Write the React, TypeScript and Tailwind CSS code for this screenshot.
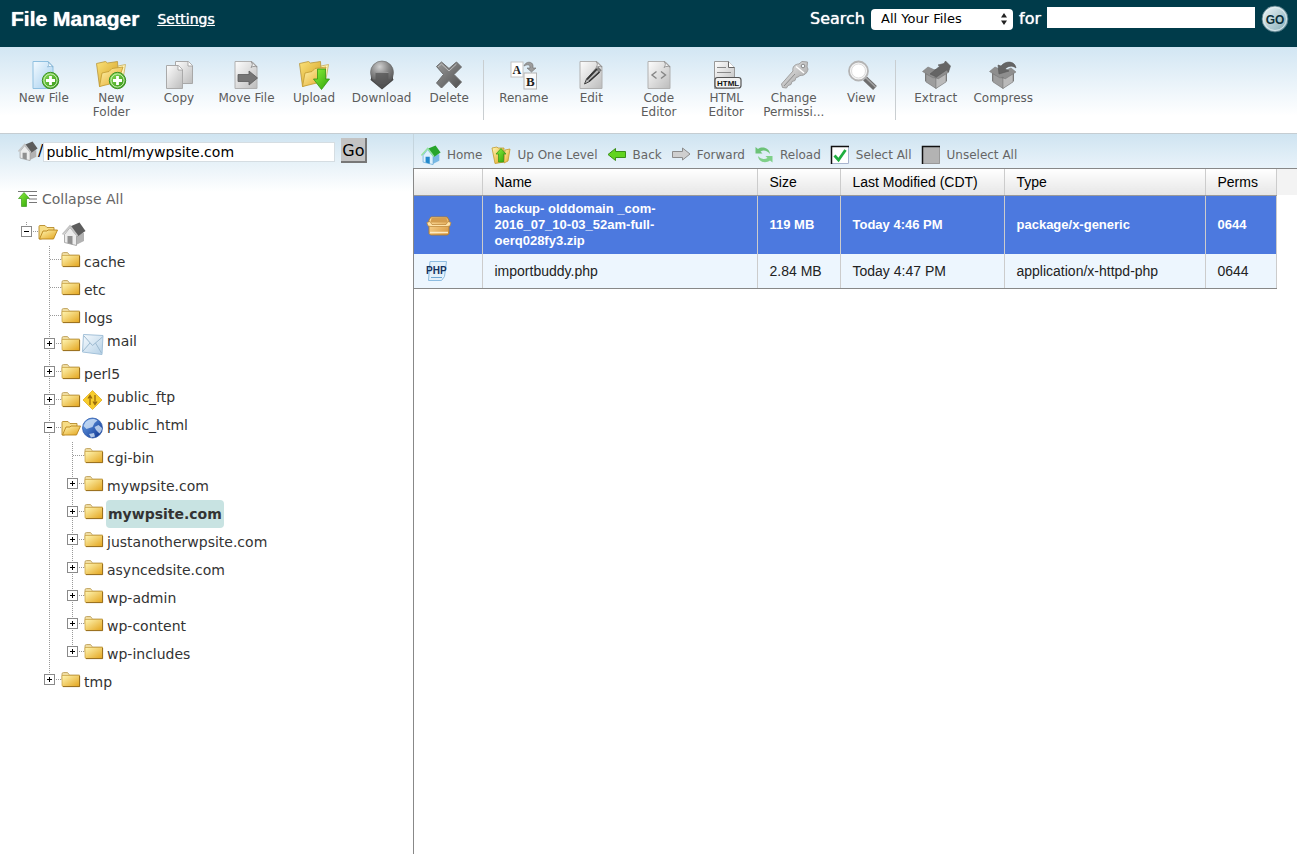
import React from "react";

type IconProps = { children: React.ReactNode; w?: number; h?: number; vb?: string };

function Svg({ children, w = 32, h = 30, vb }: IconProps) {
  return (
    <svg width={w} height={h} viewBox={vb ?? `0 0 ${w} ${h}`} className="block shrink-0" aria-hidden="true">
      {children}
    </svg>
  );
}

function Gradients() {
  const list: [string, string, string][] = [
    ["paperBlue", "#f4fbff", "#a2cdee"],
    ["paperGray", "#fdfdfd", "#bcbcbc"],
    ["gold", "#fff6b4", "#e3a41c"],
    ["goldDark", "#fbe27a", "#cf9a1c"],
    ["green", "#8be05a", "#2f8f10"],
    ["arrowGreen", "#8df03c", "#2fa408"],
    ["dark", "#9a9a9a", "#505050"],
    ["metal", "#efefef", "#9b9b9b"],
    ["globe", "#6fa8ee", "#0a2f8c"],
    ["mail", "#f7fbfe", "#b4d0e6"],
    ["box", "#ffe2a4", "#d8953a"],
    ["go", "#f2f8fa", "#7fa9b5"],
  ];
  return (
    <svg width="0" height="0" className="absolute" aria-hidden="true">
      <defs>
        {list.map(([id, a, b]) => (
          <linearGradient key={id} id={id} x1="0" y1="0" x2="1" y2="1">
            <stop offset="0" stopColor={a} />
            <stop offset="1" stopColor={b} />
          </linearGradient>
        ))}
        <radialGradient id="ball" cx="0.4" cy="0.25" r="0.8">
          <stop offset="0" stopColor="#d0d0d0" />
          <stop offset="0.5" stopColor="#858585" />
          <stop offset="1" stopColor="#505050" />
        </radialGradient>
      </defs>
    </svg>
  );
}

function PlusBadge({ cx, cy }: { cx: number; cy: number }) {
  return (
    <>
      <circle cx={cx} cy={cy} r="8.2" fill="url(#green)" stroke="#3c8f23" />
      <circle cx={cx} cy={cy} r="6.600" fill="none" stroke="#c9efb4" strokeWidth="1" />
      <path d={`M${cx - 4.5} ${cy}h9M${cx} ${cy - 4.5}v9`} stroke="#fff" strokeWidth="2.8" />
    </>
  );
}

function NewFileIcon() {
  return (
    <Svg>
      <path d="M5 1.5h15l5 5v22H5z" fill="url(#paperBlue)" stroke="#8fc0e0" />
      <path d="M20 1.5c1.5 2 1 4-.5 5.5 2-.8 4-.8 5.500 0z" fill="#fff" stroke="#7fb0d0" strokeWidth="0.8" />
      <PlusBadge cx={22.500} cy={20.500} />
    </Svg>
  );
}

function BigFolder() {
  return (
    <>
      <path d="M1.500 3.500l9-2 2 1.500 10-1.500 1 17-19 8z" fill="url(#goldDark)" stroke="#b8943a" strokeWidth="0.8" />
      <path d="M23 6l7.500-1.500L28 19l-5 2z" fill="#fff3b8" stroke="#c7ad5a" strokeWidth="0.8" />
      <path d="M4.500 26.500L7 13l7-1.500 3-3 11-1.500-5 15z" fill="url(#gold)" stroke="#c29a30" strokeWidth="0.8" />
    </>
  );
}

function NewFolderIcon() {
  return (
    <Svg>
      <BigFolder />
      <PlusBadge cx={22.500} cy={20.500} />
    </Svg>
  );
}

function UploadIcon() {
  return (
    <Svg>
      <BigFolder />
      <path d="M19.500 9h8v10h4L23.500 29.500 15.500 19h4z" fill="url(#arrowGreen)" stroke="#329414" strokeWidth="0.8" />
    </Svg>
  );
}

function CopyIcon() {
  return (
    <Svg>
      <path d="M12.500 1.500h13l4 4v18h-17z" fill="url(#paperGray)" stroke="#a8a8a8" />
      <path d="M25 1.500v4.500h4.500" fill="#fff" stroke="#999" strokeWidth="0.8" />
      <path d="M3.500 5.500h12l4 4v19h-16z" fill="url(#paperGray)" stroke="#aaa" />
      <path d="M15 5.500V10h4.500" fill="#fff" stroke="#999" strokeWidth="0.8" />
    </Svg>
  );
}

function GrayPage({ children }: { children?: React.ReactNode }) {
  return (
    <Svg>
      <path d="M5 1.500h17l5 5v22H5z" fill="url(#paperGray)" stroke="#b0b0b0" />
      <path d="M21 1.500c2 2 1.500 4 0 6 2-1.500 4-1.500 6-.5z" fill="#fafafa" stroke="#8d8d8d" strokeWidth="0.9" />
      {children}
    </Svg>
  );
}

function MoveIcon() {
  return (
    <GrayPage>
      <path d="M8 14.500h11V11l8.500 7-8.500 7v-3.500H8z" fill="#757575" stroke="#5a5a5a" strokeWidth="0.8" />
    </GrayPage>
  );
}

function DownloadIcon() {
  return (
    <Svg>
      <path d="M5 15h22v4.500h1L16 29.500 4 19.500h1z" fill="#474747" />
      <circle cx="16" cy="12.500" r="11.500" fill="url(#ball)" stroke="#666" strokeWidth="0.6" />
      <path d="M9.500 12.500h13v7h4L16 28.500 5.500 19.500h4z" fill="#555" fillOpacity="0.75" />
      <path d="M9.500 12.500h13" stroke="#a0a0a0" strokeWidth="0.8" />
    </Svg>
  );
}

function DeleteIcon() {
  return (
    <Svg>
      <path
        d="M3.500 6.500L8.500 2 16 8.500l7.500-6.500 5 5L21 14.500l7.500 7.500-5.500 6-7-7.500-7.500 7.500L3.500 23l7-8.500z"
        fill="url(#dark)"
        stroke="#6a6a6a"
        strokeLinejoin="round"
      />
      <path d="M5 7l3.500-3 7.500 7 7.500-7" fill="none" stroke="#bdbdbd" />
    </Svg>
  );
}

function RenameIcon() {
  return (
    <Svg>
      <rect x="3" y="2" width="12" height="15" fill="#fff" stroke="#c4c4c4" />
      <rect x="16" y="13" width="12.500" height="16" fill="#fafafa" stroke="#b4b4b4" />
      <text x="4.500" y="14" fontSize="12" fontWeight="bold" fontFamily="Liberation Serif, serif" fill="#222">A</text>
      <text x="18" y="26" fontSize="13" fontWeight="bold" fontFamily="Liberation Serif, serif" fill="#222">B</text>
      <path d="M16 6c1.500-5 8.500-5 9-.5v2.500h3L23.500 12 19 8h3c0-3.500-2-4-6-2z" fill="#9c9c9c" stroke="#6c6c6c" strokeWidth="0.6" />
    </Svg>
  );
}

function EditIcon() {
  return (
    <GrayPage>
      <path d="M11.500 19L21 8.500l3.500 3.500-10 9.500-5 2.500z" fill="#b5b5b5" stroke="#444" strokeWidth="1" />
      <path d="M12 19.500L22 9M14 21.500L24.500 12" stroke="#333" strokeWidth="1.600" />
      <path d="M22.500 7.500l3.500 3.500" stroke="#777" strokeWidth="2" />
    </GrayPage>
  );
}

function CodeIcon() {
  return (
    <GrayPage>
      <path d="M13.500 11.500L9 15l4.500 3.500M18 11.500l4.500 3.500-4.500 3.500" fill="none" stroke="#858585" strokeWidth="1.400" />
    </GrayPage>
  );
}

function HtmlIcon() {
  return (
    <Svg>
      <path d="M4.500 1.500h14l6 6v21h-20z" fill="url(#paperGray)" stroke="#999" />
      <path d="M18.500 1.500v6h6" fill="#fff" stroke="#666" />
      <path d="M7 7.500h9M7 12.500h14" stroke="#888" strokeWidth="1.200" />
      <rect x="5" y="17.500" width="26" height="10.500" rx="2.500" fill="#f2f2f2" stroke="#555" strokeWidth="1.200" />
      <text x="7" y="26" fontSize="8" fontWeight="bold" fontFamily="Liberation Sans, sans-serif" fill="#111">HTML</text>
    </Svg>
  );
}

function KeyIcon() {
  return (
    <Svg>
      <path
        d="M15 11c-1-4 2-7 6-7l3-2.500 5.500.5-.5 5 1 2c-.5 4-4 7-8 6.500l-2 1.500-2 .5-1 3-3 1-1 3-3 1-1.500 2.500-4-.5-1-3.500z"
        fill="url(#metal)"
        stroke="#a0a0a0"
      />
      <path d="M6 26l11-12" stroke="#8d8d8d" />
      <circle cx="25" cy="6" r="1.800" fill="#f1f8fc" stroke="#888" />
      <path d="M18 6.500l8 6.500" stroke="#fff" strokeWidth="1.500" />
    </Svg>
  );
}

function ViewIcon() {
  return (
    <Svg>
      <path d="M20 18.500L30 28" stroke="#6d6d6d" strokeWidth="5.500" />
      <path d="M20.500 17.500l10 9.500" stroke="#a5a5a5" strokeWidth="1.500" />
      <circle cx="13.500" cy="11" r="9.500" fill="#f4f4f4" stroke="#b4b4b4" strokeWidth="1.800" />
      <circle cx="13.500" cy="11" r="7" fill="#fff" stroke="#dcdcdc" />
    </Svg>
  );
}

function OpenBox({ children }: { children: React.ReactNode }) {
  return (
    <Svg>
      <path d="M5 13l11-4 11 3v9l-11 7.500L5 21z" fill="#777" />
      <path d="M6 14l10 4.500v10L6 22z" fill="#9d9d9d" stroke="#808080" strokeWidth="0.6" />
      <path d="M16 18.500l10-5V22l-10 6.500z" fill="#bababa" stroke="#808080" strokeWidth="0.6" />
      <path d="M2.500 11.500L8 7l9 4 7-3 5 4-11 7-2-2-3 1z" fill="#8e8e8e" stroke="#7c7c7c" strokeWidth="0.6" />
      {children}
    </Svg>
  );
}

function ExtractIcon() {
  return (
    <OpenBox>
      <path d="M10 14l10-8-2-1 6-1.500L25.500 1l5 5-2 6-2-2-10 7z" fill="#656565" stroke="#585858" strokeWidth="0.6" />
    </OpenBox>
  );
}

function CompressIcon() {
  return (
    <OpenBox>
      <path d="M29 8c-1-7-10-8-15-2l-3-1 1 9 10-3-4-2c3-3 7-4 11-1z" fill="#656565" stroke="#585858" strokeWidth="0.6" />
    </OpenBox>
  );
}

function HouseIcon({ size = 20, color = false }: { size?: number; color?: boolean }) {
  return (
    <Svg w={size} h={size} vb="0 0 24 24">
      <path d="M12 12l10-1v8l-9 4.500z" fill={color ? "#79b9e4" : "#b2b2b2"} />
      <path d="M2.500 12.500l5.500-7 6.500 8v10l-12-3z" fill={color ? "#dff1fc" : "#ececec"} stroke={color ? "#5aa5d6" : "#9c9c9c"} strokeWidth="0.8" />
      <path d="M5.500 14h5v8.500l-5-1.500z" fill={color ? "#2389cc" : "#909090"} />
      <path d="M8 4.500L17.500.5 23.500 9l-8 5.500z" fill={color ? "#27a52c" : "#5d5d5d"} />
      <path d="M.5 12.500L8 4l7.500 10" fill="none" stroke={color ? "#95e3a0" : "#c4c4c4"} strokeWidth="1.800" />
    </Svg>
  );
}

function FolderIcon({ open = false }: { open?: boolean }) {
  return (
    <Svg w={20} h={16}>
      {open ? (
        <>
          <path d="M1 2.500q0-1 1-1h5l2 2h7v5L3 15H1z" fill="#f7dd86" stroke="#b68a2a" strokeWidth="0.9" />
          <path d="M5 7h4l1-1h9.500l-4 9H1.500z" fill="url(#gold)" stroke="#b98518" strokeWidth="0.9" />
        </>
      ) : (
        <>
          <path d="M1 2q0-1.500 1.500-1.500h4L8.500 3h10v5H1z" fill="#efdca0" stroke="#c0a460" strokeWidth="0.9" />
          <path d="M1 3.500h17.500v11H2Q1 14.500 1 13z" fill="url(#gold)" stroke="#c79d3c" strokeWidth="0.7" />
          <path d="M2 14.600h16.600V4" fill="none" stroke="#8e6414" strokeWidth="0.9" />
        </>
      )}
    </Svg>
  );
}

function MailIcon() {
  return (
    <Svg w={23} h={22}>
      <path d="M2.500 1.500L22 2.500 21 21.500 1.500 19z" fill="url(#mail)" stroke="#a3c1d9" />
      <path d="M3 3l8.500 9.500L21.500 4M2 18l7-8M20.500 20l-6-10" fill="none" stroke="#9dbad0" />
    </Svg>
  );
}

function FtpIcon() {
  return (
    <Svg w={23} h={22}>
      <path d="M11.500 1.500l9.500 9.500-9.500 9.500L2 11z" fill="#f8cd2c" stroke="#e6b93a" />
      <path d="M9 16V7M7 9.500L9 6.500l2 3M14 6v9M12 12.500l2 3 2-3" fill="none" stroke="#9a6c0c" strokeWidth="1.300" />
    </Svg>
  );
}

function GlobeIcon() {
  return (
    <Svg w={23} h={22}>
      <circle cx="11.500" cy="11" r="10" fill="url(#globe)" stroke="#1f4da3" strokeWidth="0.7" />
      <path d="M4.500 5c3.500-3.500 9-4 12-1.500l-3 2.500-2 4-3 1-3 1-3-3zM13.500 10l4-2 3.500 3c0 2-1 4-2.500 5.500L15 13zM8 17l5-1 1 3.500-4 1z" fill="#dcebfa" opacity="0.75" />
    </Svg>
  );
}

function BoxIcon() {
  return (
    <Svg w={26} h={22}>
      <path d="M5 3h16l2 3v13.500L21.500 21h-17L3 19.500V6z" fill="url(#box)" stroke="#b07a2c" strokeWidth="0.9" />
      <path d="M5.500 4h15l1 4.500h-17z" fill="#d49d4e" />
      <path d="M.8 8.500L4 7.500l2 3h14l2-3 3 1-1 3.500-3 .5H5L2 12z" fill="#ffe3a8" stroke="#b98335" strokeWidth="0.7" />
      <path d="M4 18.500h18" stroke="#fdebc6" strokeWidth="1.500" />
    </Svg>
  );
}

function PhpIcon() {
  return (
    <Svg w={22} h={22}>
      <path d="M4 1.500h16.500l-2 15-3 4H2.500z" fill="#e3f1fb" stroke="#8dbce0" />
      <path d="M5 17.500h11" stroke="#6ea7d4" />
      <text x="0" y="13.500" fontSize="10" fontWeight="bold" fontFamily="Liberation Sans, sans-serif" fill="#16335f">PHP</text>
    </Svg>
  );
}

function UpLevelIcon() {
  return (
    <Svg w={20} h={20}>
      <path d="M1 3l5-1 1 1h6v14l-9 1.500z" fill="url(#gold)" stroke="#c19a2f" strokeWidth="0.8" />
      <path d="M14 5l5-1-2 12-4 2z" fill="url(#gold)" stroke="#c19a2f" strokeWidth="0.8" />
      <path d="M10 3.500l5 5.500h-2.500v8h-5V9H5z" fill="url(#arrowGreen)" stroke="#3d9a1a" strokeWidth="0.8" />
    </Svg>
  );
}

function ArrowIcon({ back = false }: { back?: boolean }) {
  return (
    <Svg w={20} h={20}>
      {back ? (
        <path d="M1 9.500L8.500 3.500V6.500h10v6h-10v3z" fill="#62d420" stroke="#3b8f1a" strokeLinejoin="round" />
      ) : (
        <path d="M19 9l-7.500-6v3.500h-10v6h10V15z" fill="#cfcfcf" stroke="#8c8c8c" strokeLinejoin="round" />
      )}
    </Svg>
  );
}

function ReloadIcon() {
  return (
    <Svg w={20} h={20}>
      <path d="M1.500 2v6.500h7L6.500 6.500c3-2 7-1 9.500 2.500-.5-6-7.500-8-12-5z" fill="#6cc277" />
      <path d="M18.500 17.500V11h-7l2 2c-3 2-7 1-9.500-2 .5 6 7.500 8 12 4.500z" fill="#7fd089" />
    </Svg>
  );
}

function TickBoxIcon({ on = false }: { on?: boolean }) {
  return (
    <Svg w={20} h={20}>
      <rect x="1" y="1" width="18" height="18" fill={on ? "#fff" : "#b3b3b3"} />
      <path d="M1 18.500h17.500V1" fill="none" stroke={on ? "#a9b6cf" : "#999"} />
      <path d="M1.500 19V1.500H19" fill="none" stroke="#111" strokeWidth="1.500" />
      {on && <path d="M4.500 10.500l4 4.500 7-10" fill="none" stroke="#1fae3f" strokeWidth="2.800" />}
    </Svg>
  );
}

function CollapseIcon() {
  return (
    <Svg w={20} h={18}>
      <path d="M6 2.500l5.500 6H8.500v8h-5v-8H.5z" fill="url(#arrowGreen)" stroke="#3c9a1d" strokeWidth="0.7" />
      <path d="M0 1.500h19M11 5.500h8M11 9h8M11 12.500h8" stroke="#777" />
    </Svg>
  );
}

type Joint = "root" | "leaf" | "plus" | "minus";

function Connector({ joint, last = false }: { joint: Joint; last?: boolean }) {
  const bottom = last || joint === "root" ? 14 : 28;
  const boxed = joint !== "leaf";
  return (
    <Svg w={23} h={28}>
      <path d={`M11.500 ${joint === "root" ? 4 : 0}V${bottom}`} stroke="#999" strokeDasharray="1 1" />
      <path d="M12 13.500h11" stroke="#999" strokeDasharray="1 1" />
      {boxed && (
        <>
          <rect x="6.500" y="8.500" width="10" height="10" fill="#fff" stroke="#8a8a8a" />
          <path d="M9 13.500h5" stroke="#000" />
          {joint === "plus" && <path d="M11.500 11v5" stroke="#000" />}
        </>
      )}
    </Svg>
  );
}

function Guide({ line }: { line: boolean }) {
  return <Svg w={23} h={28}>{line && <path d="M11.500 0v28" stroke="#999" strokeDasharray="1 1" />}</Svg>;
}

type Node = { name: string; level: 1 | 2; joint: Joint; last?: boolean; badge?: React.ReactNode; selected?: boolean };

const nodes: Node[] = [
  { name: "cache", level: 1, joint: "leaf" },
  { name: "etc", level: 1, joint: "leaf" },
  { name: "logs", level: 1, joint: "leaf" },
  { name: "mail", level: 1, joint: "plus", badge: <MailIcon /> },
  { name: "perl5", level: 1, joint: "plus" },
  { name: "public_ftp", level: 1, joint: "plus", badge: <FtpIcon /> },
  { name: "public_html", level: 1, joint: "minus", badge: <GlobeIcon /> },
  { name: "cgi-bin", level: 2, joint: "leaf" },
  { name: "mywpsite.com", level: 2, joint: "plus" },
  { name: "mywpsite.com", level: 2, joint: "plus", selected: true },
  { name: "justanotherwpsite.com", level: 2, joint: "plus" },
  { name: "asyncedsite.com", level: 2, joint: "plus" },
  { name: "wp-admin", level: 2, joint: "plus" },
  { name: "wp-content", level: 2, joint: "plus" },
  { name: "wp-includes", level: 2, joint: "plus", last: true },
  { name: "tmp", level: 1, joint: "plus", last: true },
];

function TreeRow({ node }: { node: Node }) {
  return (
    <li className="flex h-7 items-center">
      <Guide line={false} />
      {node.level === 2 && <Guide line />}
      <Connector joint={node.joint} last={node.last} />
      <FolderIcon open={node.joint === "minus"} />
      {node.badge}
      {node.selected ? (
        <a href="#" className="mt-1 ml-0.5 flex h-7 items-center rounded-sm bg-[#c8e3e2] px-0.5 font-bold">{node.name}</a>
      ) : (
        <a href="#" className={node.badge ? "ml-[3px] pb-1.5" : "ml-[3px] pt-1"}>{node.name}</a>
      )}
    </li>
  );
}

type Tool = { label: string; icon: React.ReactNode };

const fileTools: Tool[] = [
  { label: "New File", icon: <NewFileIcon /> },
  { label: "New Folder", icon: <NewFolderIcon /> },
  { label: "Copy", icon: <CopyIcon /> },
  { label: "Move File", icon: <MoveIcon /> },
  { label: "Upload", icon: <UploadIcon /> },
  { label: "Download", icon: <DownloadIcon /> },
  { label: "Delete", icon: <DeleteIcon /> },
];
const editTools: Tool[] = [
  { label: "Rename", icon: <RenameIcon /> },
  { label: "Edit", icon: <EditIcon /> },
  { label: "Code Editor", icon: <CodeIcon /> },
  { label: "HTML Editor", icon: <HtmlIcon /> },
  { label: "Change Permissi...", icon: <KeyIcon /> },
  { label: "View", icon: <ViewIcon /> },
];
const archiveTools: Tool[] = [
  { label: "Extract", icon: <ExtractIcon /> },
  { label: "Compress", icon: <CompressIcon /> },
];

function ToolGroup({ tools, className }: { tools: Tool[]; className: string }) {
  return (
    <div className={`grid ${className}`}>
      {tools.map((t) => (
        <button key={t.label} type="button" className="flex flex-col items-center justify-start gap-px text-center text-xs leading-[14px] text-[#5c5c5c]">
          {t.icon}
          <span className="w-min whitespace-normal">{t.label.includes(" File") ? <span className="whitespace-nowrap">{t.label}</span> : t.label}</span>
        </button>
      ))}
    </div>
  );
}

const actions: Tool[] = [
  { label: "Home", icon: <HouseIcon color /> },
  { label: "Up One Level", icon: <UpLevelIcon /> },
  { label: "Back", icon: <ArrowIcon back /> },
  { label: "Forward", icon: <ArrowIcon /> },
  { label: "Reload", icon: <ReloadIcon /> },
  { label: "Select All", icon: <TickBoxIcon on /> },
  { label: "Unselect All", icon: <TickBoxIcon /> },
];

type FileRow = { icon: React.ReactNode; cells: string[]; selected?: boolean };

const files: FileRow[] = [
  {
    icon: <BoxIcon />,
    cells: ["backup- olddomain _com-2016_07_10-03_52am-full-oerq028fy3.zip", "119 MB", "Today 4:46 PM", "package/x-generic", "0644"],
    selected: true,
  },
  { icon: <PhpIcon />, cells: ["importbuddy.php", "2.84 MB", "Today 4:47 PM", "application/x-httpd-php", "0644"] },
];

const selectedCell = "border-r border-[#ccc] bg-[#4c79df] px-3";
const plainCell = "border-r border-b border-r-[#ccc] border-b-[#888] bg-[#edf6fe] px-3";

export default function App() {
  return (
    <div className="flex min-h-screen flex-col bg-white font-['DejaVu_Sans',Verdana,sans-serif] text-sm text-[#333]">
      <Gradients />
      <header className="flex h-[47px] items-start justify-between bg-[#003b4a] pr-2 pl-[11px] text-white">
        <div className="flex items-center gap-[18px] pt-1">
          <h1 className="font-['Liberation_Sans',Arial,sans-serif] text-[21px] leading-[30px] font-bold [text-shadow:0_0_1px_#fff]">File Manager</h1>
          <a href="#" className="text-sm leading-[30px] underline [text-shadow:0_0_1px_#fff]">Settings</a>
        </div>
        <form className="flex items-center pt-1" onSubmit={(e) => e.preventDefault()}>
          <label htmlFor="scope" className="text-base [text-shadow:0_0_1px_#fff]">Search</label>
          <div className="relative mr-1.5 ml-1.5">
            <select id="scope" className="h-[21px] w-[142px] appearance-none rounded-[4px] bg-white pl-2.5 text-[13px] text-black">
              <option>All Your Files</option>
            </select>
            <svg width="8" height="12" viewBox="0 0 8 12" className="pointer-events-none absolute top-[5px] right-[5px]" aria-hidden="true">
              <path d="M4 0l3 4.500H1zM4 12L1 7.500h6z" fill="#222" />
            </svg>
          </div>
          <label htmlFor="query" className="text-base [text-shadow:0_0_1px_#fff]">for</label>
          <input id="query" type="text" className="mb-1 ml-1.5 h-[21px] w-52 bg-white px-1 text-sm text-black" />
          <button type="submit" aria-label="Go" className="ml-1.5">
            <Svg w={28} h={30} vb="0 -1 28 30">
              <circle cx="14" cy="14" r="13" fill="url(#go)" stroke="#4d7380" strokeWidth="0.8" />
              <circle cx="14" cy="14" r="11.500" fill="none" stroke="#e7f0f3" strokeWidth="0.8" />
              <text x="14" y="18.500" textAnchor="middle" fontSize="12" fontWeight="bold" fontFamily="Liberation Sans, sans-serif" fill="#0c2f3a">GO</text>
            </Svg>
          </button>
        </form>
      </header>

      <div className="flex h-[86px] bg-linear-to-b from-[#d2e6f3] to-white to-80% pt-[13px] pl-2.5">
        <ToolGroup tools={fileTools} className="w-[473px] grid-cols-7" />
        <div className="mr-1.5 h-[60px] w-px bg-[#c9ced1]" />
        <ToolGroup tools={editTools} className="w-[405px] grid-cols-6" />
        <div className="mr-1.5 h-[60px] w-px bg-[#c9ced1]" />
        <ToolGroup tools={archiveTools} className="w-[135px] grid-cols-2" />
      </div>

      <div className="flex flex-1">
        <aside className="w-[413px] shrink-0 border-t border-[#c5cdd2] bg-linear-to-b from-[#cfe4f1] to-white to-[58px]">
          <form className="flex items-center pt-1 pl-[18px]" onSubmit={(e) => e.preventDefault()}>
            <HouseIcon />
            <label htmlFor="path" className="text-base text-black">/</label>
            <input id="path" type="text" defaultValue="public_html/mywpsite.com" className="mt-0.5 h-5 w-[292px] border border-[#d5dde2] bg-white px-0.5 text-sm text-black" />
            <button type="submit" className="ml-1.5 h-[25px] w-[26px] border-r-2 border-b-2 border-[#777] bg-[#c3c3c3] pt-0.5 text-base leading-none text-black">Go</button>
          </form>
          <button type="button" className="mt-[26px] flex items-center gap-1 pl-[18px] text-[#666]">
            <CollapseIcon />
            Collapse All
          </button>
          <ul className="mt-[9px] pl-[15px]">
            <li className="flex h-7 items-center">
              <Connector joint="root" />
              <FolderIcon open />
              <span className="pt-1 pl-1"><HouseIcon size={24} /></span>
            </li>
            {nodes.map((n, i) => <TreeRow key={i} node={n} />)}
          </ul>
        </aside>

        <main className="flex min-w-0 flex-1 flex-col border-t border-[#c5cdd2]">
          <nav className="flex h-[34px] items-center gap-[9px] border-l border-[#c5d5de] bg-linear-to-b from-[#cfe4f1] to-[#e9f3fa] pt-2 pl-[7px]">
            {actions.map((a) => (
              <button key={a.label} type="button" className="flex items-center gap-1.5 text-xs whitespace-nowrap text-[#666]">
                {a.icon}
                {a.label}
              </button>
            ))}
          </nav>
          <div className="flex-1 border-t border-l border-[#888] font-['Liberation_Sans',Arial,sans-serif] text-sm leading-4">
            <table className="w-full table-fixed border-collapse text-left">
              <colgroup>
                <col className="w-[68px]" />
                <col />
                <col className="w-[83px]" />
                <col className="w-[164px]" />
                <col className="w-[201px]" />
                <col className="w-[71px]" />
                <col className="w-[21px]" />
              </colgroup>
              <thead>
                <tr className="h-[26px] text-black">
                  {["", "Name", "Size", "Last Modified (CDT)", "Type", "Perms"].map((h) => (
                    <th key={h} scope="col" className="border-r border-b border-r-[#ccc] border-b-[#999] bg-linear-to-b from-white to-[#e6e6e6] px-3 font-normal">{h}</th>
                  ))}
                  <td className="bg-[#f3f3f3]" />
                </tr>
              </thead>
              <tbody>
                {files.map((f) => (
                  <tr key={f.cells[0]} className={f.selected ? "h-[59px] text-[13px] font-bold text-white" : "h-[34px] text-[#222]"}>
                    <td className={f.selected ? selectedCell : plainCell}>{f.icon}</td>
                    {f.cells.map((c, i) => (
                      <td key={i} className={f.selected ? selectedCell : plainCell}>
                        <span className="block max-w-[190px]">{c}</span>
                      </td>
                    ))}
                    <td />
                  </tr>
                ))}
              </tbody>
            </table>
          </div>
        </main>
      </div>
    </div>
  );
}
